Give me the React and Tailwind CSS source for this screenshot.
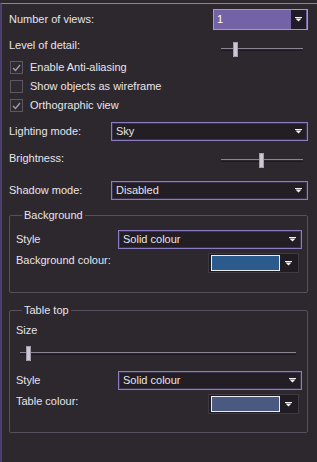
import React from 'react';

// Scene settings panel (dark purple theme)

function Arrow({ className = '' }) {
  return (
    <svg width="7" height="5" viewBox="0 0 7 5" className={className}>
      <path d="M0 0h7v1H0z M0.5 1.5h6L3.5 4.5z" fill="#f2f0f4" />
    </svg>
  );
}

function Select({ value, className = '' }) {
  return (
    <div
      className={`flex h-[19px] items-center border border-[#8c7cc4] bg-[#221e24] pl-[4px] pr-[5px] shadow-[inset_0_0_0_1px_#3a3150] ${className}`}
    >
      <span className="flex-1 leading-[13px]">{value}</span>
      <Arrow />
    </div>
  );
}

function Slider({ thumb, className = '' }) {
  return (
    <div className={`relative h-[15px] ${className}`}>
      <div className="absolute left-0 right-0 top-[6px] h-[3px] border-t border-[#8a8392] border-b border-b-[#1d191f]" />
      <div
        className="absolute top-0 h-[15px] w-[5px] border border-[#a39bab] bg-[#cdc6d4]"
        style={{ left: thumb }}
      />
    </div>
  );
}

function Check({ checked, label }) {
  return (
    <div className="flex h-[19px] items-center">
      <div className="ml-[1px] flex h-[13px] w-[13px] items-center justify-center border border-[#5d5763] bg-[#2e2a30]">
        {checked && (
          <svg width="9" height="8" viewBox="0 0 9 8">
            <path d="M1 4l2.5 2.5L8 1" stroke="#a29caa" strokeWidth="1.4" fill="none" />
          </svg>
        )}
      </div>
      <span className="ml-[7px] leading-[13px]">{label}</span>
    </div>
  );
}

function ColourButton({ colour }) {
  return (
    <div className="mr-[3px] flex h-[20px] w-[91px] items-center border border-[#3e3a43] bg-[#201c22] pl-[2px] pr-[6px]">
      <div className={`h-[16px] w-[69px] border border-[#ececec] ${colour}`} />
      <Arrow className="ml-auto" />
    </div>
  );
}

function Group({ title, className = '', children }) {
  return (
    <fieldset className={`rounded-[2px] border border-[#55505b] pl-[6px] pr-[5px] ${className}`}>
      <legend className="ml-[6px] px-[2px] leading-[12px]">{title}</legend>
      {children}
    </fieldset>
  );
}

export default function App() {
  return (
    <div className="h-[462px] w-[317px] bg-[#2c282d] pt-[3px] font-['Liberation_Sans',Arial,sans-serif] text-[11px] text-[#e8e4ec]">
      <div className="h-full border-l-2 border-t border-l-[#4b3f6e] border-t-[#8a8594] pl-[7px] pr-[9px]">
        <div className="mt-[5px] flex h-[21px] items-center">
          <span>Number of views:</span>
          <div className="ml-auto flex h-[21px] w-[95px] items-center border border-[#a596d6] bg-[#7363a6] pl-[3px] pr-[1px]">
            <span className="flex-1 text-white">1</span>
            <div className="flex h-[19px] w-[15px] items-center justify-center bg-[#1f1b27]">
              <Arrow />
            </div>
          </div>
        </div>

        <div className="mt-[6px] flex h-[19px] items-center">
          <span>Level of detail:</span>
          <Slider thumb={12} className="ml-auto mr-[5px] mt-[7px] w-[82px]" />
        </div>

        <div className="mt-[3px]">
          <Check checked label="Enable Anti-aliasing" />
          <Check label="Show objects as wireframe" />
          <Check checked label="Orthographic view" />
        </div>

        <div className="mt-[7px] flex h-[19px] items-center">
          <span className="w-[102px]">Lighting mode:</span>
          <Select value="Sky" className="flex-1" />
        </div>

        <div className="mt-[8px] flex h-[18px] items-center">
          <span>Brightness:</span>
          <Slider thumb={38} className="ml-auto mr-[5px] mt-[5px] w-[82px]" />
        </div>

        <div className="mt-[14px] flex h-[19px] items-center">
          <span className="w-[102px]">Shadow mode:</span>
          <Select value="Disabled" className="flex-1" />
        </div>

        <Group title="Background" className="mt-[9px] pb-[19px]">
          <div className="mt-[9px] flex h-[19px] items-center">
            <span className="w-[102px]">Style</span>
            <Select value="Solid colour" className="flex-1" />
          </div>
          <div className="mt-[4px] flex h-[20px] items-start">
            <span className="mt-[1px] leading-[13px]">Background colour:</span>
            <div className="ml-auto">
              <ColourButton colour="bg-[#2a5b8c]" />
            </div>
          </div>
        </Group>

        <Group title="Table top" className="mt-[11px] pb-[18px]">
          <div className="mt-[7px] flex h-[14px] items-center">Size</div>
          <Slider thumb={6} className="ml-[4px] mr-[6px] mt-[9px]" />
          <div className="mt-[10px] flex h-[19px] items-center">
            <span className="w-[102px]">Style</span>
            <Select value="Solid colour" className="flex-1" />
          </div>
          <div className="mt-[4px] flex h-[20px] items-start">
            <span className="mt-[1px] leading-[13px]">Table colour:</span>
            <div className="ml-auto">
              <ColourButton colour="bg-[#49597f]" />
            </div>
          </div>
        </Group>
      </div>
    </div>
  );
}
